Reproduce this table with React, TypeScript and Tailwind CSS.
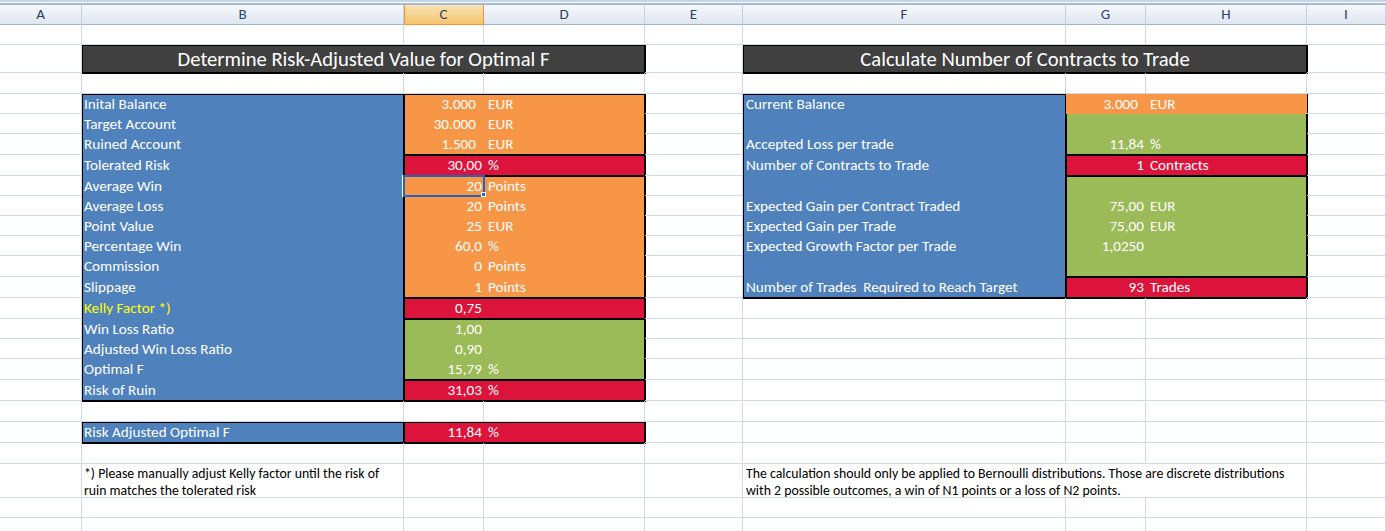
import React from "react";

const FONT = "font-[Carlito,Lato,sans-serif]";

function Filler() {
  return <div className="border-r border-b border-[#d0d7e5]" />;
}

function Label({ t, yellow }: { t: string; yellow?: boolean }) {
  return (
    <div
      className={
        "flex items-center pl-[2px] pt-[1px] whitespace-pre text-[15.2px] leading-none " +
        (yellow ? "text-[#ffff00]" : "text-white")
      }
    >
      {t}
    </div>
  );
}

function LabelR({ t }: { t: string }) {
  return (
    <div className="flex items-center pl-[3px] pt-[1px] whitespace-pre text-[15.2px] leading-none text-white">
      {t}
    </div>
  );
}

function Val({
  n,
  u,
  wide,
  bg,
  selected,
}: {
  n?: string;
  u?: string;
  wide?: boolean;
  bg?: string;
  selected?: boolean;
}) {
  return (
    <div className={"relative flex items-center pt-[1px] text-[15.2px] leading-none text-white " + (bg ?? "")}>
      <span className={"w-[80px] shrink-0 text-right " + (wide ? "pr-[8px]" : "pr-[2px]")}>{n ?? ""}</span>
      <span className="pl-[4px]">{u ?? ""}</span>
      {selected && (
        <div className="absolute left-[-1px] top-[-1px] w-[82px] h-[22px] border-2 border-[#2563c0] shadow-[-1px_0_0_0_#ffffff] z-10">
          <div className="absolute right-[-3px] bottom-[-2px] w-[5px] h-[5px] bg-[#2563c0] border border-white" />
        </div>
      )}
    </div>
  );
}

const BOX = "outline-2 outline-black -outline-offset-1";

export default function App() {
  const fillers = Array.from({ length: 128 }, (_, i) => <Filler key={"f" + i} />);
  const letters = ["A", "B", "C", "D", "E", "F", "G", "H", "I"];
  return (
    <div className={"w-[1386px] h-[531px] overflow-hidden bg-white " + FONT}>
      {/* top decoration */}
      <div className="h-[2px] bg-[#c4d4e8]" />
      <div className="h-[1px] bg-white" />
      <div className="h-[2px] bg-[#a3bbd9]" />
      {/* column header */}
      <div className="grid grid-cols-[82px_322px_80px_161px_98px_323px_80px_161px_1fr] h-[20px]">
        {letters.map((l) =>
          l === "C" ? (
            <div
              key={l}
              className="flex items-center justify-center border-r border-b border-[#f29436] shadow-[inset_1px_0_0_#f29436] bg-gradient-to-b from-[#fae2b2] to-[#f3c56b] text-[15px] leading-none text-[#2a4468]"
            >
              {l}
            </div>
          ) : (
            <div
              key={l}
              className="flex items-center justify-center border-r border-b border-r-[#c5d2e2] border-b-[#9eb6ce] bg-gradient-to-b from-[#f6f8fc] to-[#dfe6f0] text-[15px] leading-none text-[#2a4468]"
            >
              {l}
            </div>
          )
        )}
      </div>

      {/* sheet */}
      <div className="grid grid-cols-[82px_322px_80px_161px_98px_323px_80px_161px_1fr] grid-rows-[20px_28px_21px_20px_20px_21px_21px_20px_20px_20px_20px_21px_21px_21px_20px_20px_21px_21px_21px_21px_21px_34px_20px_20px]">
        {/* Titles */}
        <div className={"col-[2/5] row-[2/3] bg-[#404040] flex items-center justify-center text-white text-[20.6px] leading-none pt-[1px] " + BOX}>
          Determine Risk-Adjusted Value for Optimal F
        </div>
        <div className={"col-[6/9] row-[2/3] bg-[#404040] flex items-center justify-center text-white text-[20.6px] leading-none pt-[1px] " + BOX}>
          Calculate Number of Contracts to Trade
        </div>

        {/* Left labels */}
        <div className={"col-[2/3] row-[4/19] bg-[#4f81bd] grid grid-rows-subgrid " + BOX}>
          <Label t="Inital Balance" />
          <Label t="Target Account" />
          <Label t="Ruined Account" />
          <Label t="Tolerated Risk" />
          <Label t="Average Win" />
          <Label t="Average Loss" />
          <Label t="Point Value" />
          <Label t="Percentage Win" />
          <Label t="Commission" />
          <Label t="Slippage" />
          <Label t="Kelly Factor *)" yellow />
          <Label t="Win Loss Ratio" />
          <Label t="Adjusted Win Loss Ratio" />
          <Label t="Optimal F" />
          <Label t="Risk of Ruin" />
        </div>

        {/* Left values */}
        <div className={"col-[3/5] row-[4/7] bg-[#f79646] grid grid-rows-subgrid " + BOX}>
          <Val n="3.000" u="EUR" wide />
          <Val n="30.000" u="EUR" wide />
          <Val n="1.500" u="EUR" wide />
        </div>
        <div className={"col-[3/5] row-[7/8] bg-[#dc143c] grid grid-rows-subgrid " + BOX}>
          <Val n="30,00" u="%" />
        </div>
        <div className={"col-[3/5] row-[8/14] bg-[#f79646] grid grid-rows-subgrid " + BOX}>
          <Val n="20" u="Points" selected />
          <Val n="20" u="Points" />
          <Val n="25" u="EUR" />
          <Val n="60,0" u="%" />
          <Val n="0" u="Points" />
          <Val n="1" u="Points" />
        </div>
        <div className={"col-[3/5] row-[14/15] bg-[#dc143c] grid grid-rows-subgrid " + BOX}>
          <Val n="0,75" />
        </div>
        <div className={"col-[3/5] row-[15/18] bg-[#9bbb59] grid grid-rows-subgrid " + BOX}>
          <Val n="1,00" />
          <Val n="0,90" />
          <Val n="15,79" u="%" />
        </div>
        <div className={"col-[3/5] row-[18/19] bg-[#dc143c] grid grid-rows-subgrid " + BOX}>
          <Val n="31,03" u="%" />
        </div>

        {/* Risk adjusted */}
        <div className={"col-[2/3] row-[20/21] bg-[#4f81bd] grid grid-rows-subgrid " + BOX}>
          <Label t="Risk Adjusted Optimal F" />
        </div>
        <div className={"col-[3/5] row-[20/21] bg-[#dc143c] grid grid-rows-subgrid " + BOX}>
          <Val n="11,84" u="%" />
        </div>

        {/* Right labels */}
        <div className={"col-[6/7] row-[4/14] bg-[#4f81bd] grid grid-rows-subgrid " + BOX}>
          <LabelR t="Current Balance" />
          <LabelR t="" />
          <LabelR t="Accepted Loss per trade" />
          <LabelR t="Number of Contracts to Trade" />
          <LabelR t="" />
          <LabelR t="Expected Gain per Contract Traded" />
          <LabelR t="Expected Gain per Trade" />
          <LabelR t="Expected Growth Factor per Trade" />
          <LabelR t="" />
          <LabelR t="Number of Trades  Required to Reach Target" />
        </div>

        {/* Right values */}
        <div className={"col-[7/9] row-[4/7] bg-[#9bbb59] grid grid-rows-subgrid " + BOX}>
          <Val n="3.000" u="EUR" wide bg="bg-[#f79646]" />
          <Val />
          <Val n="11,84" u="%" />
        </div>
        <div className={"col-[7/9] row-[7/8] bg-[#dc143c] grid grid-rows-subgrid " + BOX}>
          <Val n="1" u="Contracts" />
        </div>
        <div className={"col-[7/9] row-[8/13] bg-[#9bbb59] grid grid-rows-subgrid " + BOX}>
          <Val />
          <Val n="75,00" u="EUR" />
          <Val n="75,00" u="EUR" />
          <Val n="1,0250" />
          <Val />
        </div>
        <div className={"col-[7/9] row-[13/14] bg-[#dc143c] grid grid-rows-subgrid " + BOX}>
          <Val n="93" u="Trades" />
        </div>

        {/* Notes */}
        <div className="col-[2/3] row-[22/23] border-r border-b border-[#d0d7e5] pl-[2px] pt-[1px] text-[13.8px] leading-[17px] text-black whitespace-nowrap">
          *) Please manually adjust Kelly factor until the risk of
          <br />
          ruin matches the tolerated risk
        </div>
        <div className="col-[6/9] row-[22/23] border-r border-b border-[#d0d7e5] pl-[3px] pt-[1px] text-[13.8px] leading-[17px] text-black whitespace-nowrap">
          The calculation should only be applied to Bernoulli distributions. Those are discrete distributions
          <br />
          with 2 possible outcomes, a win of N1 points or a loss of N2 points.
        </div>

        {fillers}
      </div>
    </div>
  );
}
